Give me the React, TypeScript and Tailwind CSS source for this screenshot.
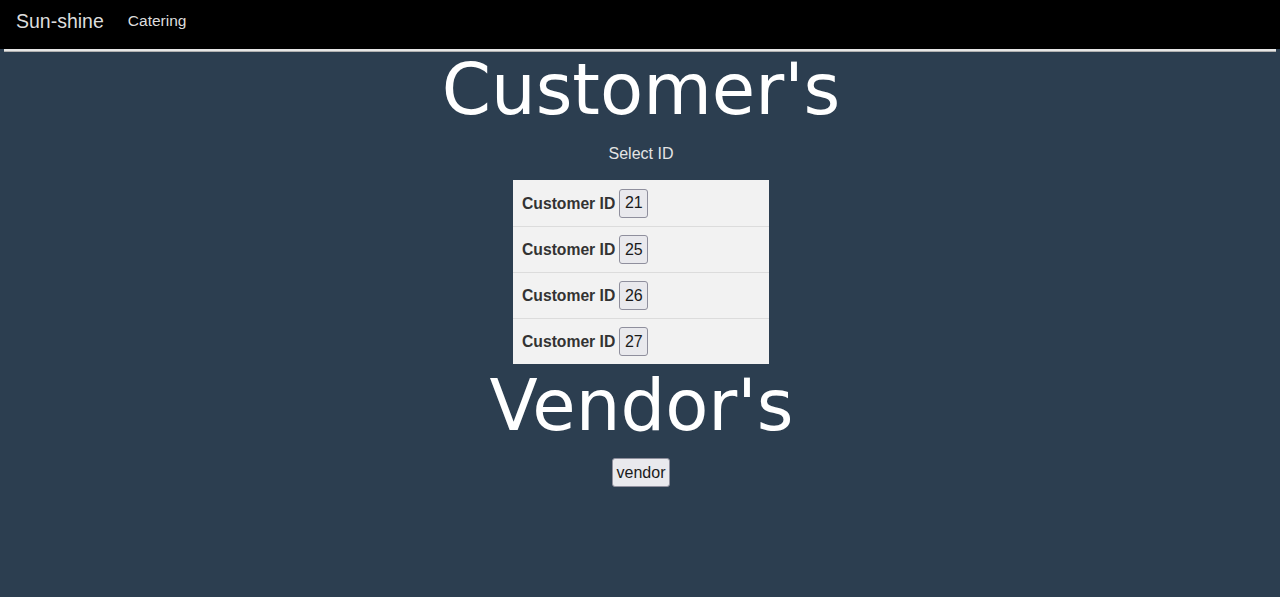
export default function App() {
  const customers = [21, 25, 26, 27];

  return (
    <div className="min-h-[597px] bg-[#2c3e50] font-['Liberation_Sans',Arial,sans-serif]">
      {/* Navbar */}
      <nav className="bg-black h-[49px] flex items-start pt-[10px] px-4">
        <a href="#" className="text-[19.5px] leading-[22px] text-[#dddddd] mr-6">
          Sun-shine
        </a>
        <a href="#" className="text-[15.5px] leading-[22px] text-[#dddddd]">
          Catering
        </a>
      </nav>
      <div className="mx-1 h-[3px] bg-[#e6e6e6] border-b border-[#b0b0b0]" />

      <main className="flex flex-col items-center">
        <h1 className="font-['DejaVu_Sans',sans-serif] text-[70.5px] leading-[81px] text-white -mt-[2px] pl-[2px]">
          Customer's
        </h1>
        <p className="text-base text-[#e4e4e4] mt-[14px] mb-[17px] leading-[18px] pl-[2px]">Select ID</p>

        <div className="w-[256px] bg-[#f2f2f2] ml-[2px]">
          {customers.map((id, i) => (
            <div
              key={id}
              className={`h-[46px] flex items-center pl-[9px] gap-[4px] ${i > 0 ? 'border-t border-[#dcdcdc]' : ''}`}
            >
              <span className="font-bold text-[15.7px] text-[#333333] pt-px">Customer ID</span>
              <button className="h-[29px] w-[29px] bg-[#e9e9ed] border border-[#8f8f9d] rounded-[3px] text-base text-[#1a1a1a]">
                {id}
              </button>
            </div>
          ))}
        </div>

        <h1 className="font-['DejaVu_Sans',sans-serif] text-[70.5px] leading-[81px] text-white mt-[2px] pl-[3px]">
          Vendor's
        </h1>
        <button className="mt-[11px] h-[29px] w-[58px] ml-[2px] bg-[#e9e9ed] border border-[#8f8f9d] rounded-[3px] text-base text-[#1a1a1a]">
          vendor
        </button>
      </main>
    </div>
  );
}
